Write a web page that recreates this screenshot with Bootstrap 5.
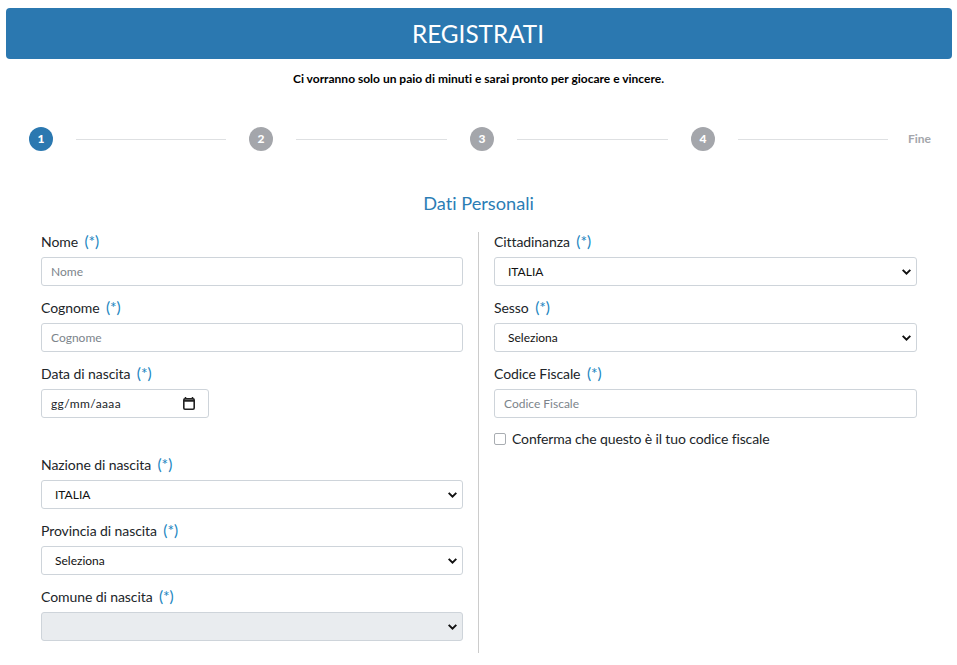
<!DOCTYPE html>
<html lang="it">
<head>
<meta charset="utf-8">
<title>Registrati</title>
<link rel="stylesheet" href="https://cdn.jsdelivr.net/npm/bootstrap@5.3.0/dist/css/bootstrap.min.css">
<style>
body{font-family:"Lato",sans-serif;color:#212529;background:#fff;font-size:14px;font-variant-ligatures:none}
.reg-head{margin:8px 5px 0 6px;padding-right:2px;height:51px;background:#2b78b0;border-radius:4px;color:#fff;font-size:24.3px;line-height:51px;text-align:center}
.reg-sub{margin:12px 0 0;font-size:12px;line-height:15px;font-weight:700;text-align:center;color:#000}
.stepper{margin:41px 26px 0 29px;height:24px}
.step-dot{width:24px;height:24px;border-radius:50%;background:#a4a6ab;color:#fff;font-size:12px;font-weight:900;line-height:24px;text-align:center;flex:none}
.step-dot.on{background:#2b78b0}
.step-line{flex:1;height:1px;background:#dee0e2;margin:0 23px}
.step-line.edge{flex:0 0 150px}
.step-line.last{margin-right:20px}
.step-end{font-size:12px;font-weight:700;color:#a4a6ab;line-height:24px;width:23px}
.sect-title{margin:40px 0 0;font-size:18.2px;line-height:24px;font-weight:400;color:#2b7db5;text-align:center}
.form-area{margin:17px 25px 0 26px;--bs-gutter-x:0}
.form-col{padding:0 15px;min-height:421px}
.form-col.split{border-right:1px solid #ccc}
.fld{margin-bottom:12px}
.fld-label{display:block;font-size:14px;line-height:19px;margin:0 0 6px;letter-spacing:-.08px}
.req{color:#2185c0;margin-left:3px;font-size:15.5px;line-height:1}
.fld-input{height:29px;min-height:29px;padding:0 9px;font-size:12px;line-height:18px;border-color:#ced4da;border-radius:3px;color:#212529}
.fld-input::placeholder{color:#7c848b}
.fld-select{height:29px;min-height:29px;padding:0 30px 0 13px;font-size:12px;border-color:#ced4da;border-radius:3px;color:#111;background-position:right 5px center;background-size:9px 6px;background-image:url("data:image/svg+xml,%3csvg xmlns='http://www.w3.org/2000/svg' viewBox='0 0 9 6'%3e%3cpath fill='none' stroke='%23111' stroke-width='2' d='M.7.9 4.5 4.6 8.3.9'/%3e%3c/svg%3e")}
.fld-date{width:168px;letter-spacing:.4px;padding:0 9px;color:#212529;background-repeat:no-repeat;background-position:right 13px center;background-size:12px 13px;background-image:url("data:image/svg+xml,%3csvg xmlns='http://www.w3.org/2000/svg' viewBox='0 0 12 13'%3e%3cpath d='M2.5 0v2M9.5 0v2' stroke='%23222' stroke-width='1.5'/%3e%3crect x='.8' y='1.8' width='10.4' height='10.4' rx='1.2' fill='none' stroke='%23222' stroke-width='1.6'/%3e%3cpath d='M1 2.5h10v2.3H1z' fill='%23222'/%3e%3c/svg%3e")}
.gap-after{margin-bottom:37px}
.fld-check{margin:-2px 0 0;font-size:14px;line-height:21px;display:flex;align-items:center;letter-spacing:-.12px}
.fld-check .form-check-input{width:12px;height:12px;margin:0 6px 0 0;border-radius:2px;border-color:#a9adb2;flex:none}
</style>
</head>
<body>
<div class="reg-head">REGISTRATI</div>
<p class="reg-sub">Ci vorranno solo un paio di minuti e sarai pronto per giocare e vincere.</p>
<div class="stepper d-flex align-items-center">
  <div class="step-dot on">1</div><div class="step-line edge"></div>
  <div class="step-dot">2</div><div class="step-line"></div>
  <div class="step-dot">3</div><div class="step-line"></div>
  <div class="step-dot">4</div><div class="step-line edge last"></div>
  <div class="step-end">Fine</div>
</div>
<h2 class="sect-title">Dati Personali</h2>
<form class="row form-area">
  <div class="col-6 form-col split">
    <div class="fld"><label class="fld-label">Nome <span class="req">(*)</span></label><input class="form-control fld-input" placeholder="Nome"></div>
    <div class="fld"><label class="fld-label">Cognome <span class="req">(*)</span></label><input class="form-control fld-input" placeholder="Cognome"></div>
    <div class="fld gap-after"><label class="fld-label">Data di nascita <span class="req">(*)</span></label><input type="text" class="form-control fld-input fld-date" value="gg/mm/aaaa"></div>
    <div class="fld"><label class="fld-label">Nazione di nascita <span class="req">(*)</span></label><select class="form-select fld-select"><option>ITALIA</option></select></div>
    <div class="fld"><label class="fld-label">Provincia di nascita <span class="req">(*)</span></label><select class="form-select fld-select"><option>Seleziona</option></select></div>
    <div class="fld"><label class="fld-label">Comune di nascita <span class="req">(*)</span></label><select class="form-select fld-select" disabled><option></option></select></div>
  </div>
  <div class="col-6 form-col">
    <div class="fld"><label class="fld-label">Cittadinanza <span class="req">(*)</span></label><select class="form-select fld-select"><option>ITALIA</option></select></div>
    <div class="fld"><label class="fld-label">Sesso <span class="req">(*)</span></label><select class="form-select fld-select"><option>Seleziona</option></select></div>
    <div class="fld"><label class="fld-label">Codice Fiscale <span class="req">(*)</span></label><input class="form-control fld-input" placeholder="Codice Fiscale"></div>
    <label class="fld-check"><input type="checkbox" class="form-check-input">Conferma che questo è il tuo codice fiscale</label>
  </div>
</form>
<script src="https://cdn.jsdelivr.net/npm/bootstrap@5.3.0/dist/js/bootstrap.bundle.min.js"></script>
</body>
</html>
